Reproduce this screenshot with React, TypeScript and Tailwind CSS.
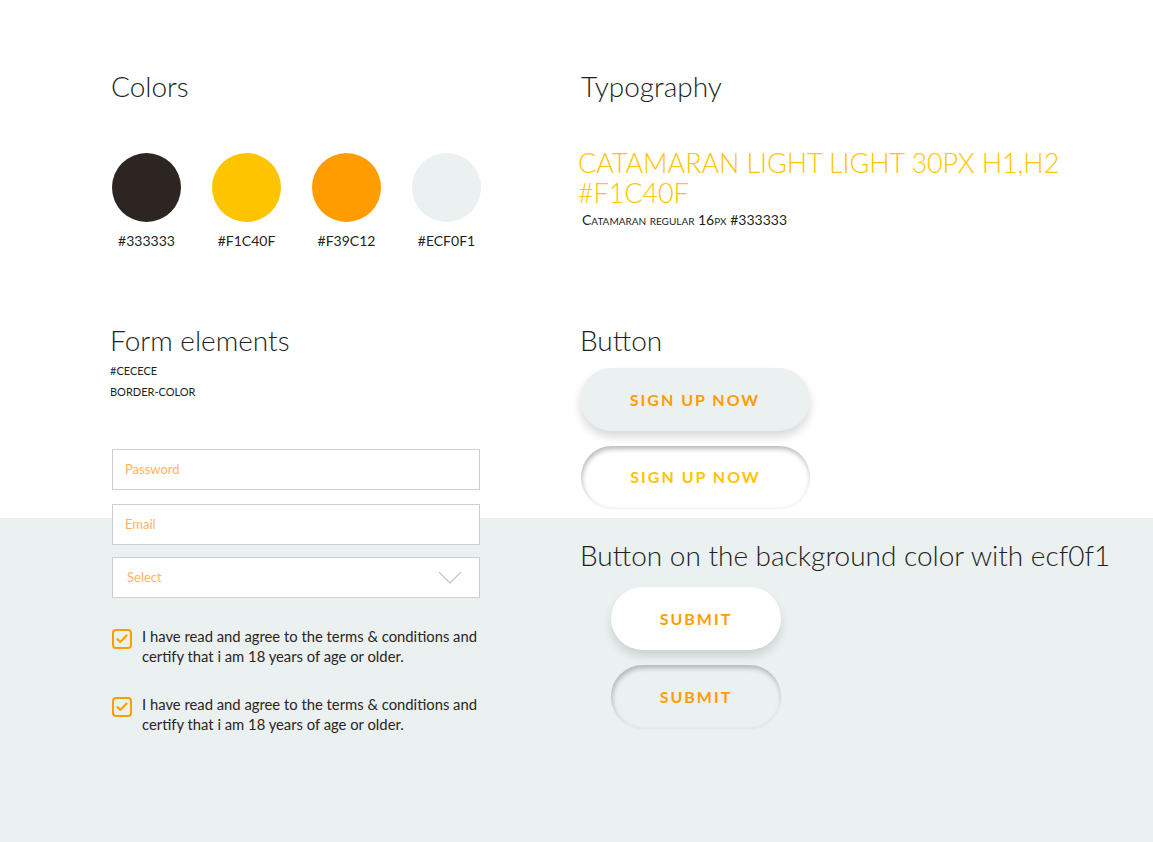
import { Check } from "lucide-react";

const swatches = [
  { hex: "#333333", bg: "bg-[#2d2522]" },
  { hex: "#F1C40F", bg: "bg-[#ffc400]" },
  { hex: "#F39C12", bg: "bg-[#ff9d00]" },
  { hex: "#ECF0F1", bg: "bg-[#ebf0f0]" },
];

function Agree() {
  return (
    <div className="flex items-start gap-[10px]">
      <div className="mt-[3px] flex h-[20px] w-[20px] shrink-0 items-center justify-center rounded-[4px] border-2 border-[#ff9d00]">
        <Check className="h-[14px] w-[14px] text-[#ff9d00]" strokeWidth={3.5} />
      </div>
      <p className="text-[14.8px] leading-[20px] text-[#2a2422]">
        I have read and agree to the terms &amp; conditions and certify that i am 18 years of age or older.
      </p>
    </div>
  );
}

export default function App() {
  return (
    <div className="h-[842px] w-full bg-[linear-gradient(to_bottom,#ffffff_518px,#ebf0f0_518px)] font-['Lato',sans-serif] text-[#231f20]">
      <div className="flex pl-[110px]">
        {/* left column */}
        <div className="w-[470px] pt-[70px]">
          <h2 className="pl-[1px] text-[28px] font-light leading-[32px]">Colors</h2>
          <div className="mt-[51px] flex gap-[31px] pl-[2px]">
            {swatches.map((s) => (
              <div key={s.hex} className="flex w-[69px] flex-col items-center">
                <div className={`h-[69px] w-[69px] rounded-full ${s.bg}`} />
                <span className="mt-[9px] whitespace-nowrap text-[14px] leading-[20px]">{s.hex}</span>
              </div>
            ))}
          </div>

          <h2 className="mt-[73px] text-[28px] font-light leading-[32px]">Form elements</h2>
          <p className="mt-[7px] text-[11px] leading-[16px]">#CECECE</p>
          <p className="mt-[5px] text-[11px] leading-[16px]">BORDER-COLOR</p>

          <div className="mt-[49px] w-[370px] pl-[2px]">
            <div className="flex h-[41px] items-center border border-[#cecece] bg-white px-[12px] text-[13px] text-[#ffb35f]">
              Password
            </div>
            <div className="mt-[14px] flex h-[41px] items-center border border-[#cecece] bg-white px-[12px] text-[13px] text-[#ffb35f]">
              Email
            </div>
            <div className="mt-[12px] flex h-[41px] items-center justify-between border border-[#cecece] bg-white pl-[14px] pr-[17px] text-[13px] text-[#ffb35f]">
              <span>Select</span>
              <svg width="24" height="13" viewBox="0 0 24 13" fill="none">
                <path d="M1 1l11 11L23 1" stroke="#c8c8c8" strokeWidth="1.3" />
              </svg>
            </div>

            <div className="mt-[28px]">
              <Agree />
            </div>
            <div className="mt-[28px]">
              <Agree />
            </div>
          </div>
        </div>

        {/* right column */}
        <div className="pt-[70px]">
          <h2 className="pl-[1px] text-[28px] font-light leading-[32px]">Typography</h2>
          <p className="-ml-[2px] mt-[46px] text-[27px] font-light uppercase leading-[30px] tracking-[-0.1px] text-[#ffc400]">
            Catamaran light light 30px H1,H2
            <br />
            #F1C40F
          </p>
          <p className="mt-[2px] pl-[2px] text-[14px] leading-[20px] [font-variant:small-caps]">
            Catamaran regular 16px #333333
          </p>

          <h2 className="mt-[94px] text-[28px] font-light leading-[32px]">Button</h2>
          <button className="mt-[12px] block h-[63px] w-[230px] rounded-full bg-[#ebf0f0] text-[16px] font-bold tracking-[2px] text-[#ff9d00] shadow-[0_6px_10px_rgba(0,0,0,0.15)]">
            SIGN UP NOW
          </button>
          <button className="ml-[1px] mt-[15px] block h-[62px] w-[229px] rounded-full bg-white text-[16px] font-bold tracking-[2px] text-[#ffc400] shadow-[inset_1px_3px_5px_rgba(0,0,0,0.28),0_1px_2px_rgba(0,0,0,0.06)]">
            SIGN UP NOW
          </button>

          <h2 className="mt-[31px] whitespace-nowrap text-[28px] font-light leading-[32px]">
            Button on the background color with ecf0f1
          </h2>
          <button className="ml-[31px] mt-[16px] block h-[63px] w-[170px] rounded-full bg-white text-[16px] font-bold tracking-[2px] text-[#ff9d00] shadow-[0_6px_10px_rgba(0,0,0,0.13)]">
            SUBMIT
          </button>
          <button className="ml-[31px] mt-[15px] block h-[63px] w-[170px] rounded-full bg-[#ebf0f0] text-[16px] font-bold tracking-[2px] text-[#ff9d00] shadow-[inset_1px_3px_5px_rgba(0,0,0,0.25),0_1px_2px_rgba(0,0,0,0.05)]">
            SUBMIT
          </button>
        </div>
      </div>
    </div>
  );
}
